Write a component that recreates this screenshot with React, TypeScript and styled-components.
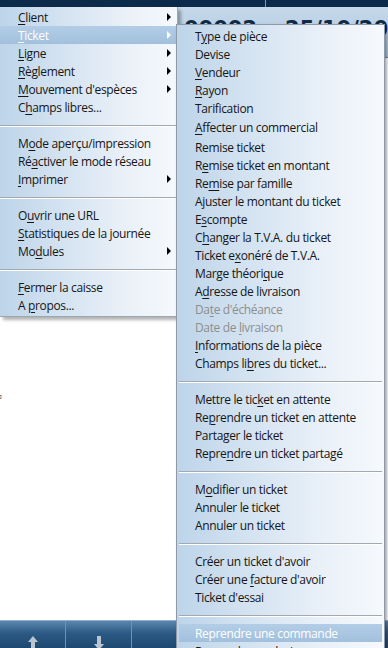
import React from "react"
import styled, { createGlobalStyle, css } from "styled-components"

type Item = {
  label: string
  sub?: boolean
  active?: boolean
  disabled?: boolean
  tall?: boolean
}
type Entry = Item | "sep"

/* "&" marks the underlined access key */
const mainMenu: Entry[] = [
  { label: "&Client", sub: true },
  { label: "&Ticket", sub: true, active: true },
  { label: "&Ligne", sub: true },
  { label: "&Règlement", sub: true },
  { label: "&Mouvement d'espèces", sub: true },
  { label: "C&hamps libres..." },
  "sep",
  { label: "M&ode aperçu/impression" },
  { label: "Ré&activer le mode réseau" },
  { label: "&Imprimer", sub: true },
  "sep",
  { label: "O&uvrir une URL" },
  { label: "&Statistiques de la journée" },
  { label: "Mo&dules", sub: true },
  "sep",
  { label: "&Fermer la caisse" },
  { label: "A &propos..." },
]

const ticketMenu: Entry[] = [
  { label: "T&ype de pièce" },
  { label: "Devise" },
  { label: "&Vendeur" },
  { label: "&Rayon" },
  { label: "Tarification" },
  { label: "&Affecter un commercial", tall: true },
  { label: "Remise ticket" },
  { label: "R&emise ticket en montant" },
  { label: "Re&mise par famille" },
  { label: "Ajuster le montant du ticket" },
  { label: "E&scompte" },
  { label: "C&hanger la T.V.A. du ticket" },
  { label: "Ticket e&xonéré de T.V.A." },
  { label: "Marge théori&que" },
  { label: "A&dresse de livraison" },
  { label: "Da&te d'échéance", disabled: true },
  { label: "Date de &livraison", disabled: true },
  { label: "&Informations de la pièce" },
  { label: "Champs li&bres du ticket..." },
  "sep",
  { label: "Mettre le tic&ket en attente" },
  { label: "Re&prendre un ticket en attente" },
  { label: "Parta&ger le ticket" },
  { label: "Repre&ndre un ticket partagé" },
  "sep",
  { label: "M&odifier un ticket" },
  { label: "Annuler le ticket" },
  { label: "Annuler un ticket" },
  "sep",
  { label: "Créer un ticket d'avoir" },
  { label: "Créer une &facture d'avoir" },
  { label: "Ticket d'essai" },
  "sep",
  { label: "Reprendre une commande", active: true },
  { label: "Reprendre un devis" },
]

const renderLabel = (label: string) => {
  const i = label.indexOf("&")
  if (i < 0) return label
  return (
    <>
      {label.slice(0, i)}
      <u>{label.charAt(i + 1)}</u>
      {label.slice(i + 2)}
    </>
  )
}

const renderEntries = (entries: Entry[], inset: boolean) =>
  entries.map((e, idx) =>
    e === "sep" ? (
      <Separator key={idx} $inset={inset} />
    ) : (
      <MenuItem
        key={idx}
        $active={!!e.active}
        $disabled={!!e.disabled}
        $height={e.tall ? 21 : 18}
        $inset={inset}>
        <span>{renderLabel(e.label)}</span>
        {e.sub && <SubArrow $active={!!e.active} />}
      </MenuItem>
    )
  )

const ArrowIcon = ({ down }: { down?: boolean }) => (
  <svg width="10" height="14" viewBox="0 0 10 14">
    <path
      d={down ? "M3 0h4v8h3L5 14 0 8h3z" : "M5 0l5 6H7v8H3V6H0z"}
      fill="#b9c6d2"
    />
  </svg>
)

const App = () => {
  return (
    <>
      <GlobalStyle />
      <Screen>
        <TopStrip>
          <TopCell />
          <TopCell $last />
        </TopStrip>
        <InfoBand>
          <BigValue>00002</BigValue>
          <BigValue>25/10/2012</BigValue>
        </InfoBand>
        <Body>
          <Stray>¤</Stray>
        </Body>
        <BottomBar>
          <BarButton>
            <ArrowIcon />
          </BarButton>
          <BarButton>
            <ArrowIcon down />
          </BarButton>
          <BarButton $wide />
        </BottomBar>

        <MainMenu>{renderEntries(mainMenu, false)}</MainMenu>
        <TicketMenu>{renderEntries(ticketMenu, true)}</TicketMenu>
      </Screen>
    </>
  )
}

export default App

const GlobalStyle = createGlobalStyle`
  html, body {
    margin: 0;
    padding: 0;
    background: #ffffff;
  }
  body {
    font-family: "Open Sans", "Noto Sans", sans-serif;
  }
`

const Screen = styled.div`
  position: relative;
  width: 388px;
  height: 648px;
  overflow: hidden;
  display: flex;
  flex-direction: column;
  background: #ffffff;
`

const TopStrip = styled.div`
  height: 7px;
  display: flex;
  background: #0c2a49;
`
const TopCell = styled.div<{ $last?: boolean }>`
  width: ${p => (p.$last ? "auto" : "265px")};
  flex: ${p => (p.$last ? 1 : "none")};
  border-right: ${p => (p.$last ? "none" : "1px solid #7f98b3")};
`

const InfoBand = styled.div`
  height: 50px;
  display: flex;
  align-items: flex-start;
  gap: 28px;
  padding-left: 184px;
  background: linear-gradient(#c6d9ea, #a9c3da);
  border-bottom: 1px solid #6f8ca8;
`
const BigValue = styled.div`
  margin-top: 9px;
  font-family: "DejaVu Sans", "Liberation Sans", sans-serif;
  font-weight: bold;
  font-size: 21px;
  line-height: 26px;
  color: #0f2a47;
  white-space: nowrap;
`

const Body = styled.div`
  flex: 1;
  background: #ffffff;
  padding-top: 332px;
`
const Stray = styled.div`
  margin-left: -3px;
  font-size: 9px;
  color: #555;
`

const BottomBar = styled.div`
  height: 27px;
  display: flex;
  background: linear-gradient(#5a87ae, #2c5a84 45%, #1d4870);
  border-top: 1px solid #8fb0cc;
`
const BarButton = styled.div<{ $wide?: boolean }>`
  width: ${p => (p.$wide ? "auto" : "65px")};
  flex: ${p => (p.$wide ? 1 : "none")};
  display: flex;
  justify-content: center;
  align-items: flex-end;
  border-right: ${p => (p.$wide ? "none" : "1px solid #6f93b5")};
  & svg {
    margin-bottom: -2px;
  }
`

const menuBg = css`
  background: linear-gradient(
    to right,
    #bdd4e9 0%,
    #d4e3f1 35%,
    #e9f0f8 70%,
    #f6f9fc 100%
  );
`

const MainMenu = styled.div`
  position: absolute;
  left: 0;
  top: 7px;
  width: 177px;
  padding: 1px 0 2px;
  ${menuBg};
  border-right: 1px solid #9aa7b4;
  border-bottom: 1px solid #9aa7b4;
  box-shadow: 3px 3px 3px rgba(0, 0, 0, 0.3);
`

const TicketMenu = styled.div`
  position: absolute;
  left: 176px;
  top: 24px;
  width: 207px;
  padding: 2px 0;
  ${menuBg};
  border: 1px solid #8f9aa6;
  box-shadow: 2px 2px 3px rgba(0, 0, 0, 0.35);
`

const MenuItem = styled.div<{
  $active: boolean
  $disabled: boolean
  $height: number
  $inset: boolean
}>`
  height: ${p => p.$height}px;
  display: flex;
  align-items: center;
  justify-content: space-between;
  padding: 0 6px 0 ${p => (p.$inset ? "16px" : "18px")};
  margin: 0 ${p => (p.$inset ? "2px" : "0")};
  font-size: 12px;
  letter-spacing: -0.35px;
  white-space: nowrap;
  color: ${p => (p.$disabled ? "#8e8e8e" : "#161616")};
  ${p =>
    p.$active &&
    css`
      color: #ffffff;
      background: linear-gradient(#b3cde6, #a2c0dd);
    `}

  & u {
    text-decoration-thickness: 1px;
    text-underline-offset: 2px;
  }
`

const SubArrow = styled.span<{ $active: boolean }>`
  width: 0;
  height: 0;
  border-top: 4px solid transparent;
  border-bottom: 4px solid transparent;
  border-left: 4px solid ${p => (p.$active ? "#ffffff" : "#000000")};
`

const Separator = styled.div<{ $inset: boolean }>`
  height: 18px;
  display: flex;
  align-items: center;
  margin: 0 ${p => (p.$inset ? "2px" : "0")};

  &::after {
    content: "";
    flex: 1;
    height: 1px;
    background: #a3a9b0;
    box-shadow: 0 1px 0 #ffffff;
  }
`
